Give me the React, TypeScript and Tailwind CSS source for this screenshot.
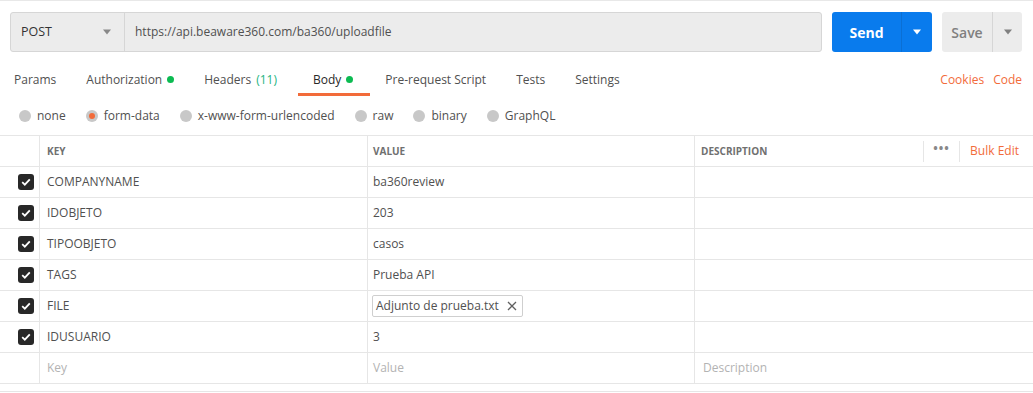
import React from "react";

const TABS = [
  { label: "Params" },
  { label: "Authorization", dot: true },
  { label: "Headers", count: "(11)" },
  { label: "Body", dot: true, active: true },
  { label: "Pre-request Script" },
  { label: "Tests" },
  { label: "Settings" },
];

const MODES = ["none", "form-data", "x-www-form-urlencoded", "raw", "binary", "GraphQL"];

const ROWS = [
  { key: "COMPANYNAME", value: "ba360review" },
  { key: "IDOBJETO", value: "203" },
  { key: "TIPOOBJETO", value: "casos" },
  { key: "TAGS", value: "Prueba API" },
  { key: "FILE", value: "Adjunto de prueba.txt", file: true },
  { key: "IDUSUARIO", value: "3" },
];

function Caret({ color }: { color: string }) {
  return (
    <svg width="10" height="6" viewBox="0 0 10 6">
      <path d="M1 0.5h8L5 5.5z" fill={color} />
    </svg>
  );
}

function Check() {
  return (
    <span className="w-4 h-4 rounded-[3px] bg-[#282828] flex items-center justify-center">
      <svg width="10" height="8" viewBox="0 0 10 8">
        <path d="M1.2 4.2l2.6 2.5L8.8 1.3" stroke="#fff" strokeWidth="1.8" fill="none" />
      </svg>
    </span>
  );
}

export default function App() {
  return (
    <div className="w-[1033px] h-[393px] bg-white font-['Open_Sans',sans-serif] text-[12px] text-[#505050] border-t border-[#e8e8e8] overflow-hidden">
      {/* ── Request bar ── */}
      <div className="flex h-[40px] mt-[11px] pl-[10px] pr-[11px]">
        <div className="flex flex-1 bg-[#ececec] border border-[#d6d6d6] rounded-[3px]">
          <div className="w-[114px] flex items-center justify-between pl-[10px] pr-[12px] border-r border-[#d6d6d6] text-[12.5px] text-[#333]">
            POST
            <Caret color="#888" />
          </div>
          <div className="flex items-center pl-[10px] text-[12px] text-[#505050]">
            https://api.beaware360.com/ba360/uploadfile
          </div>
        </div>
        <div className="flex ml-[10px] w-[100px] bg-[#097bed] rounded-[3px] text-white">
          <div className="flex-1 flex items-center justify-center text-[14px] font-bold">Send</div>
          <div className="w-[31px] flex items-center justify-center border-l border-[#0a6fd4]">
            <Caret color="#fff" />
          </div>
        </div>
        <div className="flex ml-[10px] w-[80px] bg-[#ececec] rounded-[3px] text-[#808080]">
          <div className="flex-1 flex items-center justify-center text-[14px] font-semibold">Save</div>
          <div className="w-[30px] flex items-center justify-center border-l border-[#d6d6d6]">
            <Caret color="#808080" />
          </div>
        </div>
      </div>

      {/* ── Tabs ── */}
      <div className="flex items-stretch h-[33px] mt-[11px] pr-[11px]">
        {TABS.map((t, i) => (
          <div
            key={t.label}
            className={`flex items-center gap-[5px] ${i === 0 ? "pl-[14px] pr-[15px]" : i === 3 ? "pl-[15px] pr-[17px] ml-[6px]" : "px-[15px]"} ${
              t.active ? "border-b-[3px] border-[#f26b3a] pt-[3px] text-[#282828]" : "text-[#505050]"
            }`}
          >
            {t.label}
            {t.count && <span className="text-[#26b47f]">{t.count}</span>}
            {t.dot && <span className="w-[7px] h-[7px] rounded-full bg-[#0cbb52]" />}
          </div>
        ))}
        <div className="ml-auto flex items-center gap-[9px] text-[#f26b3a]">
          <span>Cookies</span>
          <span>Code</span>
        </div>
      </div>

      {/* ── Body modes ── */}
      <div className="flex items-center h-[39px] pl-[19px] gap-[20px]">
        {MODES.map((m) => (
          <div key={m} className="flex items-center gap-[6px] text-[#505050]">
            {m === "form-data" ? (
              <span className="w-[12px] h-[12px] rounded-full bg-[#c8c8c8] flex items-center justify-center">
                <span className="w-[6px] h-[6px] rounded-full bg-[#f26b3a]" />
              </span>
            ) : (
              <span className="w-[12px] h-[12px] rounded-full bg-[#c8c8c8]" />
            )}
            {m}
          </div>
        ))}
      </div>

      {/* ── Table ── */}
      <div className="border-t border-[#e6e6e6]">
        <div className="grid grid-cols-[40px_328px_327px_1fr] h-[31px] border-b border-[#e6e6e6] text-[10px] font-bold text-[#707070]">
          <div className="border-r border-[#e6e6e6]" />
          <div className="flex items-center pl-[7px] border-r border-[#e6e6e6]">KEY</div>
          <div className="flex items-center pl-[5px] border-r border-[#e6e6e6]">VALUE</div>
          <div className="flex items-center pl-[6px]">
            DESCRIPTION
            <div className="ml-auto flex items-center h-[21px]">
              <div className="h-full border-l border-[#e6e6e6] w-[36px] flex items-center justify-center text-[#888] text-[12px] tracking-[1px] leading-none pb-[4px]">
                •••
              </div>
              <div className="h-full border-l border-[#e6e6e6] flex items-center pl-[10px] pr-[14px] text-[12px] font-normal text-[#f26b3a]">
                Bulk Edit
              </div>
            </div>
          </div>
        </div>
        {ROWS.map((r) => (
          <div key={r.key} className="grid grid-cols-[40px_328px_327px_1fr] h-[31px] border-b border-[#e6e6e6]">
            <div className="flex items-center justify-end pr-[5px] border-r border-[#e6e6e6]">
              <Check />
            </div>
            <div className="flex items-center pl-[7px] border-r border-[#e6e6e6]">{r.key}</div>
            <div className="flex items-center pl-[5px] border-r border-[#e6e6e6]">
              {r.file ? (
                <span className="flex items-center h-[22px] pl-[3px] pr-[5px] gap-[8px] border border-[#cfcfcf] rounded-[2px] -ml-[1px]">
                  {r.value}
                  <svg width="10" height="10" viewBox="0 0 10 10">
                    <path d="M1 1l8 8M9 1l-8 8" stroke="#606060" strokeWidth="1.3" />
                  </svg>
                </span>
              ) : (
                r.value
              )}
            </div>
            <div />
          </div>
        ))}
        <div className="grid grid-cols-[40px_328px_327px_1fr] h-[31px] border-b border-[#e6e6e6] text-[#b3b3b3]">
          <div className="border-r border-[#e6e6e6]" />
          <div className="flex items-center pl-[7px] border-r border-[#e6e6e6]">Key</div>
          <div className="flex items-center pl-[5px] border-r border-[#e6e6e6]">Value</div>
          <div className="flex items-center pl-[8px]">Description</div>
        </div>
        <div className="h-[8px] border-b border-[#e6e6e6]" />
      </div>
    </div>
  );
}
